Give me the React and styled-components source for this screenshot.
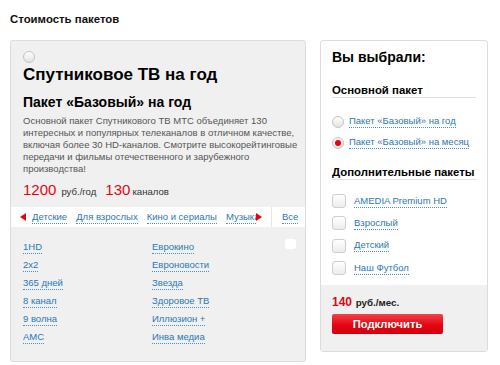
import React from "react";
import styled, { createGlobalStyle } from "styled-components";

const Global = createGlobalStyle`
  html, body { margin: 0; padding: 0; background: #fff; }
  body { font-family: "Liberation Sans", Arial, sans-serif; color: #111; }
`;

const Page = styled.div`
  width: 500px;
  height: 365px;
  padding: 12px 0 0 10px;
  box-sizing: border-box;
  overflow: hidden;
`;

const Title = styled.h2`
  margin: 0;
  font-size: 11.4px;
  line-height: 14px;
  font-weight: bold;
  color: #111;
`;

const Columns = styled.div`
  display: flex;
  gap: 14px;
  margin-top: 14px;
  align-items: flex-start;
`;

const LeftPanel = styled.section`
  width: 296px;
  height: 322px;
  box-sizing: border-box;
  background: #f0f0f0;
  border: 1px solid #dcdcdc;
  border-radius: 3px;
  position: relative;
`;

const Top = styled.div`
  padding: 10px 5px 0 12px;
`;

const Radio = styled.span`
  display: block;
  box-sizing: border-box;
  width: 12px;
  height: 12px;
  border-radius: 50%;
  border: 1px solid #c4c4c4;
  background: linear-gradient(#ffffff, #e2e2e2);
  position: relative;
  flex: none;
  &::after {
    content: "";
    display: ${(p) => (p.$checked ? "block" : "none")};
    position: absolute;
    left: 2px;
    top: 2px;
    width: 6px;
    height: 6px;
    border-radius: 50%;
    background: #e30611;
  }
`;

const Heading = styled.h1`
  margin: 0;
  font-size: 17px;
  line-height: 24px;
  font-weight: bold;
  color: #000;
`;

const SubHeading = styled.h3`
  margin: 6px 0 0;
  font-size: 14px;
  line-height: 18px;
  font-weight: bold;
  color: #000;
`;

const Desc = styled.p`
  margin: 4px 0 0;
  font-size: 9.5px;
  line-height: 12px;
  color: #555;
`;

const PriceRow = styled.div`
  display: flex;
  align-items: baseline;
  gap: 5px;
  margin-top: 6px;
  height: 20px;
`;

const Big = styled.span`
  font-size: 15px;
  color: #e30611;
  margin-left: ${(p) => (p.$gap ? "4px" : "0")};
`;

const Small = styled.span`
  font-size: 9.6px;
  color: #333;
  margin-left: ${(p) => (p.$tight ? "-3px" : "0")};
`;

const Tabs = styled.nav`
  margin-top: 6px;
  height: 20px;
  background: #fff;
  display: flex;
  align-items: center;
  padding-left: 9px;
`;

const Arrow = styled.span`
  width: 0;
  height: 0;
  border-top: 4px solid transparent;
  border-bottom: 4px solid transparent;
  ${(p) =>
    p.$dir === "left"
      ? "border-right: 6px solid #e30611;"
      : "border-left: 6px solid #e30611;"}
  flex: none;
`;

const Scroller = styled.div`
  width: 224px;
  margin-left: 6px;
  overflow: hidden;
  white-space: nowrap;
  display: flex;
  gap: 9px;
  flex: none;
`;

const Link = styled.a`
  color: #2b78b3;
  font-size: 9.5px;
  line-height: 12px;
  text-decoration: none;
  border-bottom: 1px dotted #4a90c8;
  white-space: nowrap;
  cursor: pointer;
`;

const Sep = styled.span`
  width: 1px;
  align-self: stretch;
  background: #e6e6e6;
  margin: 0 10px 0 9px;
`;

const Channels = styled.div`
  display: grid;
  grid-template-columns: 129px 129px;
  grid-auto-rows: 18px;
  align-items: center;
  padding: 11px 12px 0;
  justify-items: start;
`;

const Thumb = styled.span`
  position: absolute;
  left: 274px;
  top: 198px;
  width: 11px;
  height: 10px;
  border-radius: 3px;
  background: #fff;
`;

const RightPanel = styled.aside`
  width: 168px;
  height: 312px;
  box-sizing: border-box;
  border: 1px solid #dcdcdc;
  border-radius: 3px;
  background: #fff;
  display: flex;
  flex-direction: column;
  overflow: hidden;
`;

const RightBody = styled.div`
  padding: 7px 11px 0;
  flex: 1;
`;

const ChoiceTitle = styled.h2`
  margin: 0;
  font-size: 14px;
  line-height: 18px;
  font-weight: bold;
  color: #000;
`;

const GroupTitle = styled.h4`
  margin: ${(p) => p.$mt} 0 0;
  font-size: 11.4px;
  line-height: 14px;
  font-weight: bold;
  color: #000;
  white-space: nowrap;
  border-bottom: 1px solid #e2e2e2;
`;

const List = styled.div`
  display: flex;
  flex-direction: column;
  margin-top: ${(p) => p.$mt};
`;

const Option = styled.label`
  display: flex;
  align-items: center;
  gap: ${(p) => p.$gap};
  height: ${(p) => p.$h};
`;

const Check = styled.span`
  display: block;
  box-sizing: border-box;
  width: 14px;
  height: 14px;
  border-radius: 3px;
  border: 1px solid #cfcfcf;
  background: linear-gradient(#ffffff, #ececec);
  flex: none;
`;

const Footer = styled.div`
  background: #f0f0f0;
  height: 66px;
  box-sizing: border-box;
  padding: 10px 11px 0;
`;

const Total = styled.div`
  font-size: 9.8px;
  line-height: 14px;
  font-weight: bold;
  color: #222;
  & b { color: #e30611; font-size: 12px; margin-right: 1px; }
`;

const Button = styled.button`
  display: block;
  margin-top: 4px;
  width: 111px;
  height: 20px;
  border: none;
  border-radius: 2px;
  background: linear-gradient(#f2434a, #e30611 55%, #d5000c);
  color: #fff;
  font-family: "Liberation Sans", Arial, sans-serif;
  font-size: 11.2px;
  font-weight: bold;
  padding: 0;
  cursor: pointer;
`;

const left = ["1HD", "2x2", "365 дней", "8 канал", "9 волна", "AMC"];
const right = ["Еврокино", "Евроновости", "Звезда", "Здоровое ТВ", "Иллюзион +", "Инва медиа"];

export default function App() {
  return (
    <Page>
      <Global />
      <Title>Стоимость пакетов</Title>
      <Columns>
        <LeftPanel>
          <Top>
            <Radio />
            <Heading>Спутниковое ТВ на год</Heading>
            <SubHeading>Пакет «Базовый» на год</SubHeading>
            <Desc>
              Основной пакет Спутникового ТВ МТС объединяет 130 интересных и популярных
              телеканалов в отличном качестве, включая более 30 HD-каналов. Смотрите
              высокорейтинговые передачи и фильмы отечественного и зарубежного производства!
            </Desc>
            <PriceRow>
              <Big>1200</Big>
              <Small>руб./год</Small>
              <Big $gap>130</Big>
              <Small $tight>каналов</Small>
            </PriceRow>
          </Top>
          <Tabs>
            <Arrow $dir="left" />
            <Scroller>
              <Link>Детские</Link>
              <Link>Для взрослых</Link>
              <Link>Кино и сериалы</Link>
              <Link>Музыка</Link>
            </Scroller>
            <Arrow $dir="right" />
            <Sep />
            <Link>Все</Link>
          </Tabs>
          <Channels>
            {left.map((l, i) => (
              <React.Fragment key={l}>
                <Link>{l}</Link>
                <Link>{right[i]}</Link>
              </React.Fragment>
            ))}
          </Channels>
          <Thumb />
        </LeftPanel>
        <RightPanel>
          <RightBody>
            <ChoiceTitle>Вы выбрали:</ChoiceTitle>
            <GroupTitle $mt="17px">Основной пакет</GroupTitle>
            <List $mt="13px">
              <Option $gap="5px" $h="21px">
                <Radio />
                <Link>Пакет «Базовый» на год</Link>
              </Option>
              <Option $gap="5px" $h="21px">
                <Radio $checked />
                <Link>Пакет «Базовый» на месяц</Link>
              </Option>
            </List>
            <GroupTitle $mt="12px">Дополнительные пакеты</GroupTitle>
            <List $mt="10px">
              {["AMEDIA Premium HD", "Взрослый", "Детский", "Наш Футбол"].map((t) => (
                <Option key={t} $gap="8px" $h="22.3px">
                  <Check />
                  <Link>{t}</Link>
                </Option>
              ))}
            </List>
          </RightBody>
          <Footer>
            <Total>
              <b>140</b> руб./мес.
            </Total>
            <Button>Подключить</Button>
          </Footer>
        </RightPanel>
      </Columns>
    </Page>
  );
}
